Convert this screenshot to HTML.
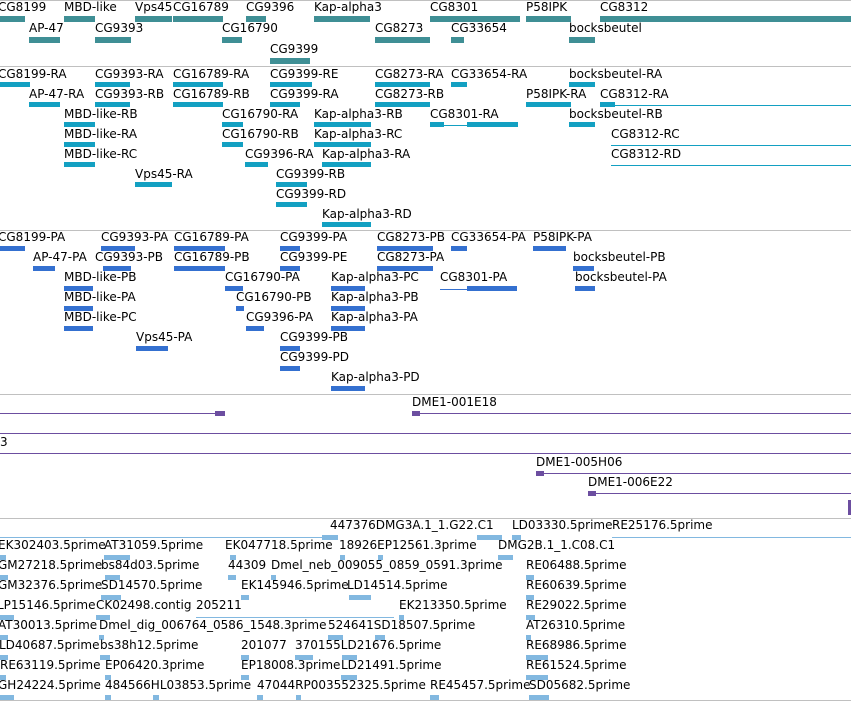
<!DOCTYPE html><html><head><meta charset="utf-8"><style>
body{margin:0;width:851px;height:702px;background:#fff;position:relative;overflow:hidden}
.l{position:absolute;font:12px/13px "DejaVu Sans",sans-serif;color:#000;white-space:nowrap;margin-top:-1px}
.b{position:absolute;height:5px}
.h{position:absolute;height:1px;left:0;width:851px;background:#c0c0c0}
.g{background:#3f8f95;height:6px}.c{background:#13a0c2}.p{background:#3470d0}.e{background:#82b8e0}.v{background:#6c4ea0}
.n{height:1px}
</style></head><body>
<div class="h" style="top:0"></div>
<div class="h" style="top:66px"></div><div class="h" style="top:230px"></div><div class="h" style="top:394px"></div><div class="h" style="top:518px"></div><div class="h" style="top:700px"></div>

<!-- track 1 -->
<i class="l" style="left:-2px;top:2px">CG8199</i><div class="b g" style="left:0;top:16px;width:25px"></div>
<i class="l" style="left:64px;top:2px">MBD-like</i><div class="b g" style="left:64px;top:16px;width:31px"></div>
<i class="l" style="left:135px;top:2px">Vps45</i><div class="b g" style="left:135px;top:16px;width:37px"></div>
<i class="l" style="left:173px;top:2px">CG16789</i><div class="b g" style="left:173px;top:16px;width:50px"></div>
<i class="l" style="left:246px;top:2px">CG9396</i><div class="b g" style="left:246px;top:16px;width:20px"></div>
<i class="l" style="left:314px;top:2px">Kap-alpha3</i><div class="b g" style="left:314px;top:16px;width:56px"></div>
<i class="l" style="left:430px;top:2px">CG8301</i><div class="b g" style="left:430px;top:16px;width:90px"></div>
<i class="l" style="left:526px;top:2px">P58IPK</i><div class="b g" style="left:526px;top:16px;width:45px"></div>
<i class="l" style="left:600px;top:2px">CG8312</i><div class="b g" style="left:600px;top:16px;width:251px"></div>
<i class="l" style="left:29px;top:23px">AP-47</i><div class="b g" style="left:29px;top:37px;width:31px"></div>
<i class="l" style="left:95px;top:23px">CG9393</i><div class="b g" style="left:95px;top:37px;width:36px"></div>
<i class="l" style="left:222px;top:23px">CG16790</i><div class="b g" style="left:222px;top:37px;width:20px"></div>
<i class="l" style="left:375px;top:23px">CG8273</i><div class="b g" style="left:375px;top:37px;width:55px"></div>
<i class="l" style="left:451px;top:23px">CG33654</i><div class="b g" style="left:451px;top:37px;width:13px"></div>
<i class="l" style="left:569px;top:23px">bocksbeutel</i><div class="b g" style="left:569px;top:37px;width:26px"></div>
<i class="l" style="left:270px;top:44px">CG9399</i><div class="b g" style="left:270px;top:58px;width:40px"></div>

<!-- track 2 -->
<i class="l" style="left:-2px;top:69px">CG8199-RA</i><div class="b c" style="left:0;top:82px;width:30px"></div>
<i class="l" style="left:95px;top:69px">CG9393-RA</i><div class="b c" style="left:95px;top:82px;width:35px"></div>
<i class="l" style="left:173px;top:69px">CG16789-RA</i><div class="b c" style="left:173px;top:82px;width:50px"></div>
<i class="l" style="left:270px;top:69px">CG9399-RE</i><div class="b c" style="left:270px;top:82px;width:42px"></div>
<i class="l" style="left:375px;top:69px">CG8273-RA</i><div class="b c" style="left:375px;top:82px;width:55px"></div>
<i class="l" style="left:451px;top:69px">CG33654-RA</i><div class="b c" style="left:451px;top:82px;width:16px"></div>
<i class="l" style="left:569px;top:69px">bocksbeutel-RA</i><div class="b c" style="left:569px;top:82px;width:26px"></div>
<i class="l" style="left:29px;top:89px">AP-47-RA</i><div class="b c" style="left:29px;top:102px;width:31px"></div>
<i class="l" style="left:95px;top:89px">CG9393-RB</i><div class="b c" style="left:95px;top:102px;width:35px"></div>
<i class="l" style="left:173px;top:89px">CG16789-RB</i><div class="b c" style="left:173px;top:102px;width:50px"></div>
<i class="l" style="left:270px;top:89px">CG9399-RA</i><div class="b c" style="left:270px;top:102px;width:30px"></div>
<i class="l" style="left:375px;top:89px">CG8273-RB</i><div class="b c" style="left:375px;top:102px;width:55px"></div>
<i class="l" style="left:526px;top:89px">P58IPK-RA</i><div class="b c" style="left:526px;top:102px;width:45px"></div>
<i class="l" style="left:600px;top:89px">CG8312-RA</i><div class="b c" style="left:600px;top:102px;width:15px"></div><div class="b c n" style="left:600px;top:105px;width:251px"></div>
<i class="l" style="left:64px;top:109px">MBD-like-RB</i><div class="b c" style="left:64px;top:122px;width:31px"></div>
<i class="l" style="left:222px;top:109px">CG16790-RA</i><div class="b c" style="left:222px;top:122px;width:21px"></div>
<i class="l" style="left:314px;top:109px">Kap-alpha3-RB</i><div class="b c" style="left:314px;top:122px;width:57px"></div>
<i class="l" style="left:430px;top:109px">CG8301-RA</i><div class="b c" style="left:430px;top:122px;width:14px"></div><div class="b c n" style="left:430px;top:125px;width:88px"></div><div class="b c" style="left:467px;top:122px;width:51px"></div>
<i class="l" style="left:569px;top:109px">bocksbeutel-RB</i><div class="b c" style="left:569px;top:122px;width:26px"></div>
<i class="l" style="left:64px;top:129px">MBD-like-RA</i><div class="b c" style="left:64px;top:142px;width:31px"></div>
<i class="l" style="left:222px;top:129px">CG16790-RB</i><div class="b c" style="left:222px;top:142px;width:21px"></div>
<i class="l" style="left:314px;top:129px">Kap-alpha3-RC</i><div class="b c" style="left:314px;top:142px;width:57px"></div>
<i class="l" style="left:611px;top:129px">CG8312-RC</i><div class="b c n" style="left:611px;top:145px;width:240px"></div>
<i class="l" style="left:64px;top:149px">MBD-like-RC</i><div class="b c" style="left:64px;top:162px;width:31px"></div>
<i class="l" style="left:245px;top:149px">CG9396-RA</i><div class="b c" style="left:245px;top:162px;width:23px"></div>
<i class="l" style="left:322px;top:149px">Kap-alpha3-RA</i><div class="b c" style="left:322px;top:162px;width:49px"></div>
<i class="l" style="left:611px;top:149px">CG8312-RD</i><div class="b c n" style="left:611px;top:165px;width:240px"></div>
<i class="l" style="left:135px;top:169px">Vps45-RA</i><div class="b c" style="left:135px;top:182px;width:37px"></div>
<i class="l" style="left:276px;top:169px">CG9399-RB</i><div class="b c" style="left:276px;top:182px;width:31px"></div>
<i class="l" style="left:276px;top:189px">CG9399-RD</i><div class="b c" style="left:276px;top:202px;width:31px"></div>
<i class="l" style="left:322px;top:209px">Kap-alpha3-RD</i><div class="b c" style="left:322px;top:222px;width:49px"></div>

<!-- track 3 -->
<i class="l" style="left:-2px;top:232px">CG8199-PA</i><div class="b p" style="left:0;top:246px;width:25px"></div>
<i class="l" style="left:101px;top:232px">CG9393-PA</i><div class="b p" style="left:101px;top:246px;width:34px"></div>
<i class="l" style="left:174px;top:232px">CG16789-PA</i><div class="b p" style="left:174px;top:246px;width:51px"></div>
<i class="l" style="left:280px;top:232px">CG9399-PA</i><div class="b p" style="left:280px;top:246px;width:20px"></div>
<i class="l" style="left:377px;top:232px">CG8273-PB</i><div class="b p" style="left:377px;top:246px;width:56px"></div>
<i class="l" style="left:451px;top:232px">CG33654-PA</i><div class="b p" style="left:451px;top:246px;width:16px"></div>
<i class="l" style="left:533px;top:232px">P58IPK-PA</i><div class="b p" style="left:533px;top:246px;width:33px"></div>
<i class="l" style="left:33px;top:252px">AP-47-PA</i><div class="b p" style="left:33px;top:266px;width:22px"></div>
<i class="l" style="left:95px;top:252px">CG9393-PB</i><div class="b p" style="left:103px;top:266px;width:28px"></div>
<i class="l" style="left:174px;top:252px">CG16789-PB</i><div class="b p" style="left:174px;top:266px;width:51px"></div>
<i class="l" style="left:280px;top:252px">CG9399-PE</i><div class="b p" style="left:280px;top:266px;width:20px"></div>
<i class="l" style="left:377px;top:252px">CG8273-PA</i><div class="b p" style="left:377px;top:266px;width:56px"></div>
<i class="l" style="left:573px;top:252px">bocksbeutel-PB</i><div class="b p" style="left:573px;top:266px;width:21px"></div>
<i class="l" style="left:64px;top:272px">MBD-like-PB</i><div class="b p" style="left:64px;top:286px;width:29px"></div>
<i class="l" style="left:225px;top:272px">CG16790-PA</i><div class="b p" style="left:225px;top:286px;width:18px"></div>
<i class="l" style="left:331px;top:272px">Kap-alpha3-PC</i><div class="b p" style="left:331px;top:286px;width:34px"></div>
<i class="l" style="left:440px;top:272px">CG8301-PA</i><div class="b p n" style="left:440px;top:289px;width:77px"></div><div class="b p" style="left:467px;top:286px;width:50px"></div>
<i class="l" style="left:575px;top:272px">bocksbeutel-PA</i><div class="b p" style="left:575px;top:286px;width:20px"></div>
<i class="l" style="left:64px;top:292px">MBD-like-PA</i><div class="b p" style="left:64px;top:306px;width:29px"></div>
<i class="l" style="left:236px;top:292px">CG16790-PB</i><div class="b p" style="left:236px;top:306px;width:8px"></div>
<i class="l" style="left:331px;top:292px">Kap-alpha3-PB</i><div class="b p" style="left:331px;top:306px;width:34px"></div>
<i class="l" style="left:64px;top:312px">MBD-like-PC</i><div class="b p" style="left:64px;top:326px;width:29px"></div>
<i class="l" style="left:246px;top:312px">CG9396-PA</i><div class="b p" style="left:246px;top:326px;width:18px"></div>
<i class="l" style="left:331px;top:312px">Kap-alpha3-PA</i><div class="b p" style="left:331px;top:326px;width:34px"></div>
<i class="l" style="left:136px;top:332px">Vps45-PA</i><div class="b p" style="left:136px;top:346px;width:32px"></div>
<i class="l" style="left:280px;top:332px">CG9399-PB</i><div class="b p" style="left:280px;top:346px;width:20px"></div>
<i class="l" style="left:280px;top:352px">CG9399-PD</i><div class="b p" style="left:280px;top:366px;width:20px"></div>
<i class="l" style="left:331px;top:372px">Kap-alpha3-PD</i><div class="b p" style="left:331px;top:386px;width:34px"></div>

<!-- track 4 -->
<div class="b v n" style="left:0;top:413px;width:218px"></div><div class="b v" style="left:215px;top:411px;width:10px"></div>
<i class="l" style="left:412px;top:397px">DME1-001E18</i><div class="b v" style="left:412px;top:411px;width:8px"></div><div class="b v n" style="left:412px;top:413px;width:439px"></div>
<div class="b v n" style="left:0;top:433px;width:851px"></div>
<i class="l" style="left:0;top:437px">3</i>
<div class="b v n" style="left:0;top:453px;width:851px"></div>
<i class="l" style="left:536px;top:457px">DME1-005H06</i><div class="b v" style="left:536px;top:471px;width:8px"></div><div class="b v n" style="left:536px;top:473px;width:315px"></div>
<i class="l" style="left:588px;top:477px">DME1-006E22</i><div class="b v" style="left:588px;top:491px;width:8px"></div><div class="b v n" style="left:588px;top:493px;width:263px"></div>
<div class="b v" style="left:848px;top:500px;width:3px;height:15px"></div>

<!-- track 5 -->
<i class="l" style="left:330px;top:520px">447376DMG3A.1_1.G22.C1</i><div class="b e n" style="left:0;top:537px;width:325px"></div><div class="b e" style="left:322px;top:535px;width:16px"></div><div class="b e" style="left:477px;top:535px;width:25px"></div>
<i class="l" style="left:512px;top:520px">LD03330.5prime</i><div class="b e" style="left:512px;top:535px;width:9px"></div>
<i class="l" style="left:612px;top:520px">RE25176.5prime</i><div class="b e n" style="left:612px;top:537px;width:239px"></div>
<i class="l" style="left:-2px;top:540px">EK302403.5prime</i><div class="b e" style="left:0;top:555px;width:6px"></div>
<i class="l" style="left:104px;top:540px">AT31059.5prime</i><div class="b e" style="left:104px;top:555px;width:26px"></div>
<i class="l" style="left:225px;top:540px">EK047718.5prime</i><div class="b e" style="left:230px;top:555px;width:6px"></div>
<i class="l" style="left:339px;top:540px">18926EP12561.3prime</i><div class="b e" style="left:340px;top:555px;width:5px"></div><div class="b e" style="left:378px;top:555px;width:5px"></div>
<i class="l" style="left:498px;top:540px">DMG2B.1_1.C08.C1</i><div class="b e" style="left:498px;top:555px;width:15px"></div>
<i class="l" style="left:-2px;top:560px">GM27218.5prime</i><div class="b e" style="left:0;top:575px;width:8px"></div>
<i class="l" style="left:101px;top:560px">bs84d03.5prime</i><div class="b e" style="left:105px;top:575px;width:15px"></div>
<i class="l" style="left:228px;top:560px">44309</i><div class="b e" style="left:228px;top:575px;width:8px"></div>
<i class="l" style="left:271px;top:560px">Dmel_neb_009055_0859_0591.3prime</i><div class="b e" style="left:271px;top:575px;width:5px"></div>
<i class="l" style="left:526px;top:560px">RE06488.5prime</i><div class="b e" style="left:526px;top:575px;width:8px"></div>
<i class="l" style="left:-2px;top:580px">GM32376.5prime</i>
<i class="l" style="left:101px;top:580px">SD14570.5prime</i><div class="b e" style="left:101px;top:595px;width:20px"></div>
<i class="l" style="left:241px;top:580px">EK145946.5prime</i><div class="b e" style="left:241px;top:595px;width:8px"></div>
<i class="l" style="left:347px;top:580px">LD14514.5prime</i><div class="b e" style="left:349px;top:595px;width:22px"></div>
<i class="l" style="left:526px;top:580px">RE60639.5prime</i><div class="b e" style="left:526px;top:595px;width:8px"></div>
<i class="l" style="left:-3px;top:600px">LP15146.5prime</i><div class="b e" style="left:0;top:615px;width:14px"></div>
<i class="l" style="left:96px;top:600px">CK02498.contig</i><div class="b e" style="left:96px;top:615px;width:14px"></div>
<i class="l" style="left:196px;top:600px">205211</i><div class="b e n" style="left:196px;top:617px;width:198px"></div>
<i class="l" style="left:399px;top:600px">EK213350.5prime</i><div class="b e" style="left:399px;top:615px;width:5px"></div>
<i class="l" style="left:526px;top:600px">RE29022.5prime</i><div class="b e" style="left:526px;top:615px;width:9px"></div>
<i class="l" style="left:-2px;top:620px">AT30013.5prime</i><div class="b e" style="left:0;top:635px;width:8px"></div>
<i class="l" style="left:99px;top:620px">Dmel_dig_006764_0586_1548.3prime</i><div class="b e" style="left:99px;top:635px;width:5px"></div>
<i class="l" style="left:328px;top:620px">524641SD18507.5prime</i><div class="b e" style="left:328px;top:635px;width:15px"></div><div class="b e" style="left:375px;top:635px;width:10px"></div>
<i class="l" style="left:526px;top:620px">AT26310.5prime</i><div class="b e" style="left:526px;top:635px;width:5px"></div>
<i class="l" style="left:-1px;top:640px">LD40687.5prime</i><div class="b e" style="left:0;top:655px;width:8px"></div>
<i class="l" style="left:100px;top:640px">bs38h12.5prime</i><div class="b e" style="left:100px;top:655px;width:10px"></div>
<i class="l" style="left:241px;top:640px">201077</i><div class="b e" style="left:241px;top:655px;width:8px"></div>
<i class="l" style="left:295px;top:640px">370155LD21676.5prime</i><div class="b e" style="left:295px;top:655px;width:18px"></div><div class="b e" style="left:342px;top:655px;width:15px"></div>
<i class="l" style="left:526px;top:640px">RE68986.5prime</i><div class="b e" style="left:526px;top:655px;width:22px"></div>
<i class="l" style="left:0;top:660px">RE63119.5prime</i><div class="b e" style="left:0;top:675px;width:6px"></div>
<i class="l" style="left:105px;top:660px">EP06420.3prime</i><div class="b e" style="left:105px;top:675px;width:6px"></div>
<i class="l" style="left:241px;top:660px">EP18008.3prime</i><div class="b e" style="left:241px;top:675px;width:8px"></div>
<i class="l" style="left:341px;top:660px">LD21491.5prime</i><div class="b e" style="left:341px;top:675px;width:16px"></div>
<i class="l" style="left:526px;top:660px">RE61524.5prime</i><div class="b e" style="left:526px;top:675px;width:22px"></div>
<i class="l" style="left:-2px;top:680px">GH24224.5prime</i><div class="b e" style="left:0;top:695px;width:14px"></div>
<i class="l" style="left:105px;top:680px">484566HL03853.5prime</i><div class="b e" style="left:105px;top:695px;width:6px"></div><div class="b e" style="left:153px;top:695px;width:6px"></div>
<i class="l" style="left:257px;top:680px">47044RP003552325.5prime</i><div class="b e" style="left:257px;top:695px;width:6px"></div><div class="b e" style="left:296px;top:695px;width:5px"></div>
<i class="l" style="left:430px;top:680px">RE45457.5prime</i><div class="b e" style="left:430px;top:695px;width:9px"></div>
<i class="l" style="left:529px;top:680px">SD05682.5prime</i><div class="b e" style="left:529px;top:695px;width:20px"></div>
</body></html>
